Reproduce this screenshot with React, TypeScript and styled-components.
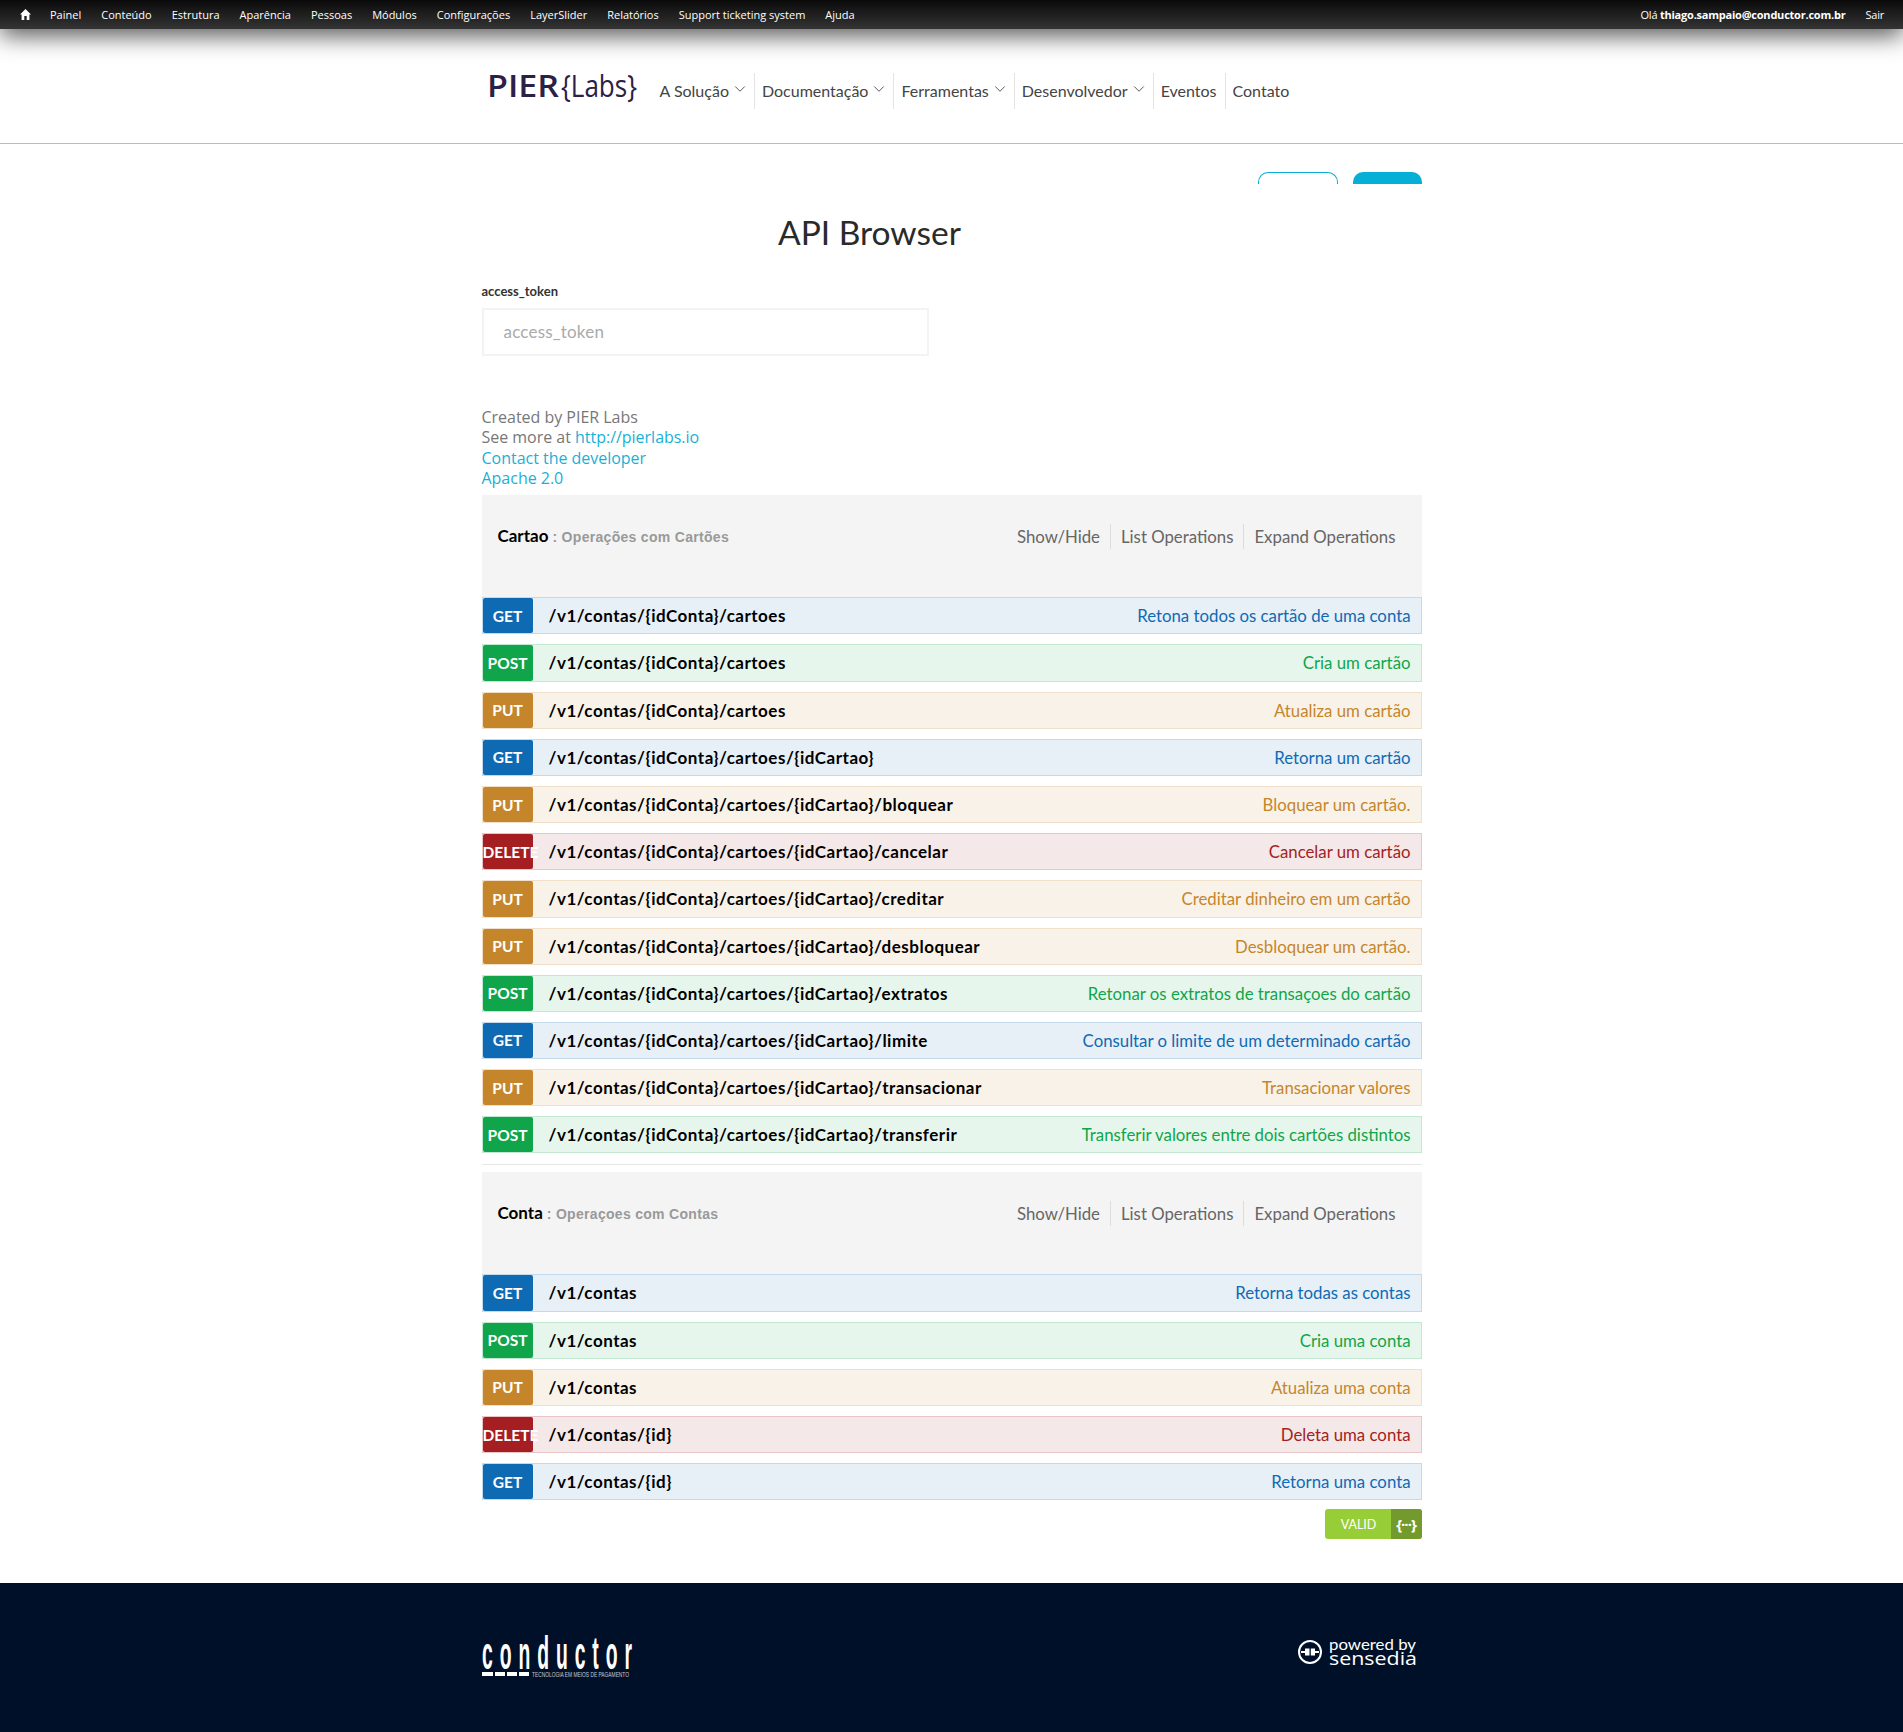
import React from "react";
import styled, { createGlobalStyle } from "styled-components";
import { ChevronDown } from "lucide-react";

const Global = createGlobalStyle`
  html, body { margin: 0; padding: 0; background: #fff; }
  body { font-family: Lato, "Open Sans", sans-serif; color: #444; }
  * { box-sizing: border-box; }
  a { text-decoration: none; color: inherit; }
`;

const Toolbar = styled.div`
  height: 29px;
  background: linear-gradient(#0a0a0a, #343434);
  box-shadow: 0 6px 24px rgba(0, 0, 0, 0.7);
  position: relative;
  display: flex;
  align-items: center;
  justify-content: space-between;
  padding: 0 19px 1px 20px;
  font: 11px "Open Sans", sans-serif;
  color: #fff;
`;
const ToolbarGroup = styled.div<{ $tight?: boolean }>`
  display: flex;
  align-items: center;
  gap: 20px;
  letter-spacing: ${(p) => (p.$tight ? "-0.22px" : "0")};
`;
const HomeLink = styled.a`
  display: flex;
  margin-right: -1px;
`;

const Header = styled.header`
  height: 115px;
  border-bottom: 1px solid #bbb;
  display: flex;
  justify-content: center;
`;
const HeaderInner = styled.div`
  width: 940px;
  display: flex;
  align-items: flex-start;
  padding: 44px 0 0 5px;
`;
const LogoMark = styled.svg`
  display: block;
  width: 156px;
  height: 36px;
  margin-top: -3px;
  overflow: visible;
`;
const Nav = styled.nav`
  display: flex;
  margin-left: 10px;
  font-size: 16px;
  color: #444;
`;
const NavItem = styled.a<{ $first?: boolean }>`
  height: 36px;
  display: flex;
  align-items: center;
  gap: 2px;
  padding: 0 8px 1px 7px;
  border-left: ${(p) => (p.$first ? "0" : "1px solid #e4e4e4")};
`;
const NavChevron = styled(ChevronDown)`
  width: 18px;
  height: 18px;
  stroke-width: 1.3;
  color: #555;
  margin: -3px -3px 0 0;
`;

const Main = styled.main`
  width: 940px;
  margin: 0 auto;
`;
const TopButtons = styled.div`
  display: flex;
  justify-content: flex-end;
  gap: 15px;
  padding-top: 28px;
`;
const TopButton = styled.div<{ $filled?: boolean }>`
  width: ${(p) => (p.$filled ? 69 : 80)}px;
  height: 12px;
  border-radius: 10px 10px 0 0;
  background: ${(p) => (p.$filled ? "#05afd6" : "#fff")};
  border: ${(p) => (p.$filled ? "0" : "1px solid #05afd6")};
  border-bottom: 0;
`;
const Title = styled.h1`
  width: 776px;
  margin: 28px 0 0;
  font-size: 33.5px;
  line-height: 40px;
  font-weight: 400;
  text-align: center;
  color: #2a2a2a;
`;
const FieldLabel = styled.label`
  display: block;
  margin-top: 31px;
  font: 700 13px/16px Lato, sans-serif;
  color: #333;
`;
const TokenInput = styled.input`
  display: block;
  width: 447px;
  height: 48px;
  margin-top: 9px;
  padding: 0 20px 2px;
  border: 2px solid #f3f3f3;
  border-radius: 0;
  font: 17px Lato, sans-serif;
  letter-spacing: 0.2px;
  outline: none;
  &::placeholder { color: #aaa; opacity: 1; }
`;
const Info = styled.div`
  margin-top: 51px;
  font: 16px/20.3px "Open Sans", sans-serif;
  letter-spacing: -0.02px;
  color: #777;
`;
const InfoLine = styled.div``;
const InfoLink = styled.a`
  color: #1ab0d6;
`;

const Section = styled.section`
  margin-top: 7px;
`;
const SectionHead = styled.div`
  height: 102px;
  background: #f4f4f4;
  display: flex;
  justify-content: space-between;
  padding: 29px 16px 0 16px;
`;
const SectionTitle = styled.div`
  display: flex;
  align-items: baseline;
  height: 24px;
  font: 700 17px/24px Lato, sans-serif;
  color: #000;
`;
const SectionNote = styled.span`
  margin-left: 4px;
  font: 700 14px/24px "Liberation Sans", sans-serif;
  color: #999;
  letter-spacing: 0.3px;
`;
const Actions = styled.div`
  display: flex;
  align-items: stretch;
  height: 25px;
  font-size: 16.8px;
  color: #666;
`;
const ActionLink = styled.a<{ $first?: boolean }>`
  display: flex;
  align-items: center;
  padding: 0 10px;
  border-left: ${(p) => (p.$first ? "0" : "1px solid #ddd")};
`;
const Rows = styled.div`
  display: flex;
  flex-direction: column;
  gap: 10px;
`;

type Method = "GET" | "POST" | "PUT" | "DELETE";
const palette: Record<Method, { bg: string; border: string; main: string }> = {
  GET: { bg: "#e7eff7", border: "#c3d9ec", main: "#0f6ab4" },
  POST: { bg: "#e7f6ec", border: "#c3e8d1", main: "#10a54a" },
  PUT: { bg: "#f9f2e9", border: "#f0e0ca", main: "#c5862b" },
  DELETE: { bg: "#f5e8e8", border: "#e8c6c7", main: "#a41e22" },
};
const Row = styled.div<{ $m: Method }>`
  height: 37.2px;
  display: flex;
  align-items: stretch;
  background: ${(p) => palette[p.$m].bg};
  border: 1px solid ${(p) => palette[p.$m].border};
`;
const Badge = styled.span<{ $m: Method }>`
  flex: 0 0 50px;
  min-width: 0;
  display: flex;
  align-items: center;
  justify-content: safe center;
  background: ${(p) => palette[p.$m].main};
  border-radius: 2px;
  color: #fff;
  font: 700 15.5px Lato, sans-serif;
  white-space: nowrap;
`;
const PathText = styled.span`
  margin-left: 16px;
  font: 700 17px/35px Lato, sans-serif;
  letter-spacing: 0.5px;
  color: #000;
`;
const Desc = styled.span<{ $m: Method }>`
  margin-left: auto;
  padding-right: 10px;
  font: 16.8px/35px Lato, sans-serif;
  color: ${(p) => palette[p.$m].main};
`;
const Divider = styled.div`
  height: 1px;
  margin-top: 11px;
  background: #e6e6e6;
`;
const ValidRow = styled.div`
  display: flex;
  justify-content: flex-end;
  margin-top: 9px;
`;
const ValidBadge = styled.div`
  width: 97px;
  height: 30px;
  display: flex;
  border-radius: 3px;
  overflow: hidden;
  background: #97cd37;
  color: #fff;
`;
const ValidText = styled.span`
  flex: 1;
  display: flex;
  align-items: center;
  justify-content: center;
  padding-left: 2px;
  font: 12.5px Lato, sans-serif;
`;
const ValidIcon = styled.span`
  flex: 0 0 31px;
  display: flex;
  align-items: center;
  justify-content: center;
  background: #739a2c;
  font: 700 15px "Open Sans", sans-serif;
  letter-spacing: -1px;
`;

const Footer = styled.footer`
  height: 149px;
  margin-top: 44px;
  background: #011029;
  display: flex;
  justify-content: center;
`;
const FooterInner = styled.div`
  width: 940px;
  display: flex;
  justify-content: space-between;
  align-items: flex-start;
  padding-top: 54px;
`;
const FooterLogo = styled.svg`
  display: block;
  overflow: visible;
`;

const ops: Record<string, [Method, string, string][]> = {
  cartao: [
    ["GET", "/v1/contas/{idConta}/cartoes", "Retona todos os cartão de uma conta"],
    ["POST", "/v1/contas/{idConta}/cartoes", "Cria um cartão"],
    ["PUT", "/v1/contas/{idConta}/cartoes", "Atualiza um cartão"],
    ["GET", "/v1/contas/{idConta}/cartoes/{idCartao}", "Retorna um cartão"],
    ["PUT", "/v1/contas/{idConta}/cartoes/{idCartao}/bloquear", "Bloquear um cartão."],
    ["DELETE", "/v1/contas/{idConta}/cartoes/{idCartao}/cancelar", "Cancelar um cartão"],
    ["PUT", "/v1/contas/{idConta}/cartoes/{idCartao}/creditar", "Creditar dinheiro em um cartão"],
    ["PUT", "/v1/contas/{idConta}/cartoes/{idCartao}/desbloquear", "Desbloquear um cartão."],
    ["POST", "/v1/contas/{idConta}/cartoes/{idCartao}/extratos", "Retonar os extratos de transaçoes do cartão"],
    ["GET", "/v1/contas/{idConta}/cartoes/{idCartao}/limite", "Consultar o limite de um determinado cartão"],
    ["PUT", "/v1/contas/{idConta}/cartoes/{idCartao}/transacionar", "Transacionar valores"],
    ["POST", "/v1/contas/{idConta}/cartoes/{idCartao}/transferir", "Transferir valores entre dois cartões distintos"],
  ],
  conta: [
    ["GET", "/v1/contas", "Retorna todas as contas"],
    ["POST", "/v1/contas", "Cria uma conta"],
    ["PUT", "/v1/contas", "Atualiza uma conta"],
    ["DELETE", "/v1/contas/{id}", "Deleta uma conta"],
    ["GET", "/v1/contas/{id}", "Retorna uma conta"],
  ],
};

const adminLinks = ["Painel", "Conteúdo", "Estrutura", "Aparência", "Pessoas", "Módulos", "Configurações", "LayerSlider", "Relatórios", "Support ticketing system", "Ajuda"];
const navLinks: [string, boolean][] = [["A Solução", true], ["Documentação", true], ["Ferramentas", true], ["Desenvolvedor", true], ["Eventos", false], ["Contato", false]];

function ApiSection({ name, note, items }: { name: string; note: string; items: [Method, string, string][] }) {
  return (
    <Section>
      <SectionHead>
        <SectionTitle>
          {name}
          <SectionNote>: {note}</SectionNote>
        </SectionTitle>
        <Actions>
          <ActionLink $first>Show/Hide</ActionLink>
          <ActionLink>List Operations</ActionLink>
          <ActionLink>Expand Operations</ActionLink>
        </Actions>
      </SectionHead>
      <Rows>
        {items.map(([m, path, desc], i) => (
          <Row key={i} $m={m}>
            <Badge $m={m}>{m}</Badge>
            <PathText>{path}</PathText>
            <Desc $m={m}>{desc}</Desc>
          </Row>
        ))}
      </Rows>
    </Section>
  );
}

export default function App() {
  return (
    <>
      <Global />
      <Toolbar>
        <ToolbarGroup>
          <HomeLink>
            <svg width="11" height="11" viewBox="0 0 11 11" fill="#fff">
              <path d="M5.5 0 L11 5.6 L9.4 5.6 L9.4 11 L6.7 11 L6.7 7 L4.3 7 L4.3 11 L1.6 11 L1.6 5.6 L0 5.6 Z" />
            </svg>
          </HomeLink>
          {adminLinks.map((l) => (
            <a key={l}>{l}</a>
          ))}
        </ToolbarGroup>
        <ToolbarGroup $tight>
          <span>
            Olá <b>thiago.sampaio@conductor.com.br</b>
          </span>
          <a>Sair</a>
        </ToolbarGroup>
      </Toolbar>
      <Header>
        <HeaderInner>
          <LogoMark viewBox="0 0 156 36">
            <text x="0" y="27" fill="#2b2048" fontFamily="Open Sans" fontWeight="600" fontSize="31" textLength="72" lengthAdjust="spacingAndGlyphs">PIER</text>
            <text x="74" y="27" fill="#2b2048" fontFamily="Open Sans" fontWeight="400" fontSize="31" textLength="76" lengthAdjust="spacingAndGlyphs">{"{Labs}"}</text>
          </LogoMark>
          <Nav>
            {navLinks.map(([l, c], i) => (
              <NavItem key={l} $first={i === 0}>
                {l}
                {c && <NavChevron />}
              </NavItem>
            ))}
          </Nav>
        </HeaderInner>
      </Header>
      <Main>
        <TopButtons>
          <TopButton />
          <TopButton $filled />
        </TopButtons>
        <Title>API Browser</Title>
        <FieldLabel>access_token</FieldLabel>
        <TokenInput placeholder="access_token" />
        <Info>
          <InfoLine>Created by PIER Labs</InfoLine>
          <InfoLine>
            See more at <InfoLink>http://pierlabs.io</InfoLink>
          </InfoLine>
          <InfoLine>
            <InfoLink>Contact the developer</InfoLink>
          </InfoLine>
          <InfoLine>
            <InfoLink>Apache 2.0</InfoLink>
          </InfoLine>
        </Info>
        <ApiSection name="Cartao" note="Operações com Cartões" items={ops.cartao} />
        <Divider />
        <ApiSection name="Conta" note="Operaçoes com Contas" items={ops.conta} />
        <ValidRow>
          <ValidBadge>
            <ValidText>VALID</ValidText>
            <ValidIcon>{"{···}"}</ValidIcon>
          </ValidBadge>
        </ValidRow>
      </Main>
      <Footer>
        <FooterInner>
          <FooterLogo width="152" height="44" viewBox="0 0 152 44">
            <g transform="scale(0.42 1)">
              <text x="0" y="32" fill="#fff" fontFamily="Liberation Sans" fontWeight="700" fontSize="46" textLength="357" lengthAdjust="spacing">conductor</text>
            </g>
            <rect x="0" y="35" width="11" height="4" fill="#fff" />
            <rect x="13" y="35" width="10" height="4" fill="#fff" />
            <rect x="25" y="35" width="10" height="4" fill="#fff" />
            <rect x="37" y="35" width="10" height="4" fill="#fff" />
            <text x="50" y="39.5" fill="#c8ccd2" fontFamily="Liberation Sans" fontSize="6.3" textLength="97" lengthAdjust="spacingAndGlyphs">TECNOLOGIA EM MEIOS DE PAGAMENTO</text>
          </FooterLogo>
          <FooterLogo width="125" height="36" viewBox="0 0 125 36">
            <circle cx="13" cy="15" r="11" fill="none" stroke="#fff" strokeWidth="2" />
            <path d="M4 15 H9 M17 15 H22" stroke="#fff" strokeWidth="2" />
            <path d="M8 11.5 H12.5 V18.5 H8 Z M18 11.5 H13.8 V18.5 H18 Z" fill="#fff" />
            <text x="32" y="13" fill="#fff" fontFamily="Lato" fontSize="16" textLength="87" lengthAdjust="spacingAndGlyphs">powered by</text>
            <text x="32" y="28" fill="#fff" fontFamily="Open Sans" fontSize="19" textLength="88" lengthAdjust="spacingAndGlyphs">sensedia</text>
          </FooterLogo>
        </FooterInner>
      </Footer>
    </>
  );
}
